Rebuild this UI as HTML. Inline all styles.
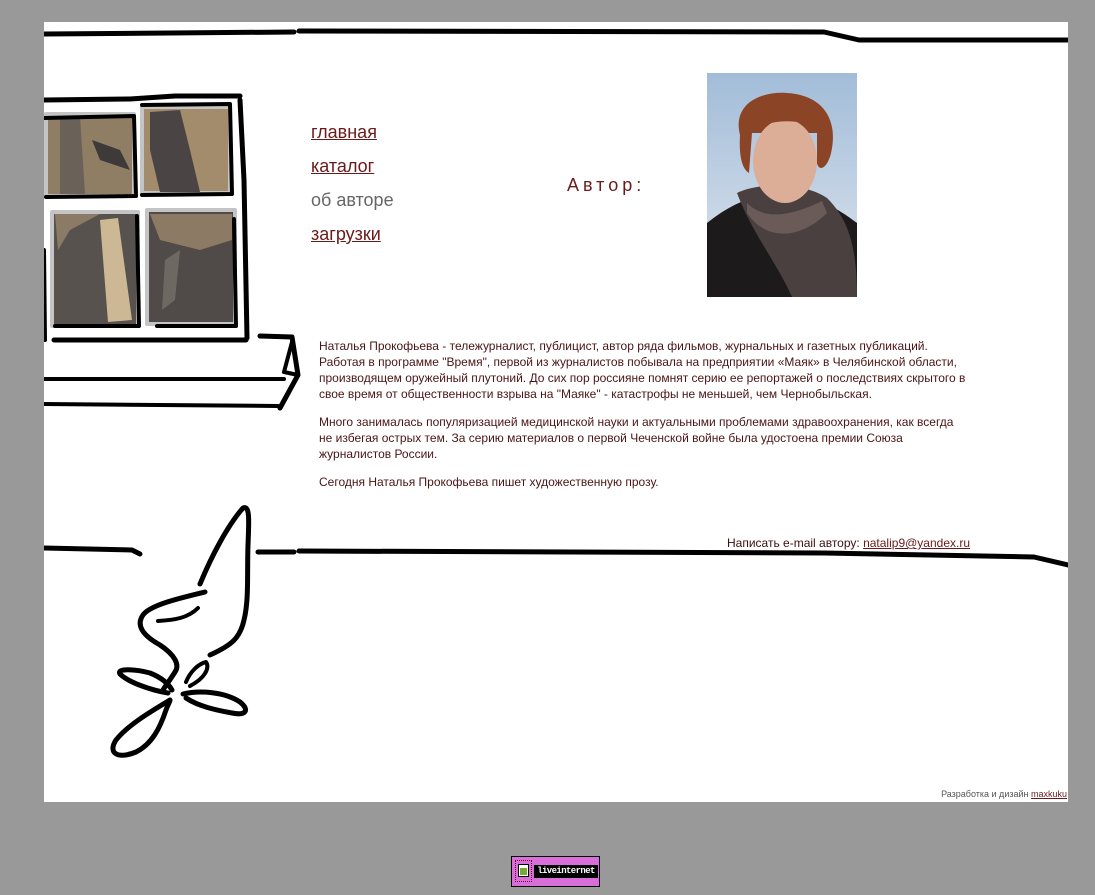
<!DOCTYPE html>
<html><head><meta charset="utf-8"><style>
body{margin:0;background:#999;width:1095px;height:895px;position:relative;overflow:hidden;font-family:"Liberation Sans",Arial,sans-serif}
#w{position:absolute;left:44px;top:22px;width:1024px;height:780px;background:#fff;overflow:hidden}
.nav{position:absolute;left:267px;font-size:18px;color:#6b1a1a;text-decoration:underline}
.txt{position:absolute;left:275px;top:316px;width:700px;font-size:12px;line-height:16px;color:#4a1414;white-space:nowrap}
.txt p{margin:0 0 12px}
a{color:#6b1a1a;text-decoration:underline}
</style></head><body>
<div id="w">
<svg width="1024" height="780" style="position:absolute;left:0;top:0" fill="none" stroke="#000" stroke-linecap="round" stroke-linejoin="round">
<g transform="translate(-44,-22)">
<path d="M44 34 L294 32" stroke-width="5"/>
<path d="M299 31 L824 32 L859 40 L1068 40" stroke-width="5"/>
<rect x="46" y="114" width="88" height="82" fill="#8f7d64" stroke="#c4c4c4" stroke-width="4"/>
<path d="M60 116 L80 116 L85 194 L60 194Z" fill="#6a6258" stroke="none"/>
<path d="M92 140 L120 150 L130 170 L100 160Z" fill="#3e3a3a" stroke="none"/>
<rect x="142" y="107" width="88" height="86" fill="#a38c6c" stroke="#c4c4c4" stroke-width="4"/>
<path d="M150 112 L180 110 L190 150 L200 192 L160 192 L150 150Z" fill="#4a4444" stroke="none"/>
<rect x="52" y="212" width="86" height="114" fill="#58524e" stroke="#c4c4c4" stroke-width="4"/>
<path d="M55 214 L100 214 L70 230 L58 250Z" fill="#8a7a66" stroke="none"/>
<path d="M100 220 L118 218 L132 320 L108 322Z" fill="#cdb896" stroke="none"/>
<rect x="147" y="210" width="88" height="114" fill="#504a48" stroke="#c4c4c4" stroke-width="4"/>
<path d="M150 214 L232 214 L232 240 L200 250 L160 240Z" fill="#8c7a64" stroke="none"/>
<path d="M165 260 L180 250 L175 300 L162 310Z" fill="#6e6862" stroke="none"/>
<path d="M44 118 L134 116 L136 196 L46 197" stroke-width="4"/>
<path d="M142 105 L230 104 L232 194 L142 195" stroke-width="4"/>
<path d="M137 216 L139 326 L55 326" stroke-width="4"/>
<path d="M234 219 L236 326 L157 326" stroke-width="4"/>
<path d="M44 100 L130 99 L175 96 L240 96" stroke-width="5"/>
<path d="M240 100 L244 180 L247 338" stroke-width="5"/>
<path d="M44 250 L45 340" stroke-width="4"/>
<path d="M54 340 L246 340" stroke-width="5"/>
<path d="M260 336 L292 337 L298 375 L280 408" stroke-width="5"/>
<path d="M292 342 L284 372 L298 375" stroke-width="4"/>
<path d="M44 379 L284 379" stroke-width="4"/>
<path d="M44 404 L278 406" stroke-width="4"/>
<path d="M44 548 L132 550 L140 554" stroke-width="5"/>
<path d="M258 552 L294 552" stroke-width="5"/>
<path d="M299 551 L824 553 L1034 557 L1068 565" stroke-width="5"/>
<path d="M200 584 C212 555 228 525 243 508 C250 505 249 520 248 545 C247 575 249 600 244 620 C240 638 232 645 210 655" stroke-width="5"/>
<path d="M205 592 C180 598 150 605 143 615 C136 625 142 635 160 645 C175 655 180 665 175 672 C170 680 166 685 163 690" stroke-width="5"/>
<path d="M158 621 C175 620 188 618 198 608" stroke-width="4"/>
<path d="M168 693 C150 690 128 682 120 674 C116 668 135 669 150 673 C160 677 168 683 172 690" stroke-width="5"/>
<path d="M170 700 C150 712 128 725 116 740 C108 752 116 760 136 752 C152 744 160 728 166 710 C168 704 170 702 170 700" stroke-width="5"/>
<path d="M183 694 C200 690 225 692 240 702 C250 710 246 716 232 713 C215 710 198 706 186 698" stroke-width="5"/>
<path d="M186 682 C190 672 198 664 206 662 C210 668 205 678 190 686" stroke-width="4"/>
</g>
</svg>
<a class="nav" style="top:100px">главная</a>
<a class="nav" style="top:134px">каталог</a>
<div class="nav" style="top:168px;color:#666;text-decoration:none">об авторе</div>
<a class="nav" style="top:202px">загрузки</a>
<div style="position:absolute;left:523px;top:153px;font-size:18px;letter-spacing:4px;color:#6b1a1a">Автор:</div>
<svg style="position:absolute;left:663px;top:51px" width="150" height="224">
<defs><linearGradient id="bg" x1="0" y1="0" x2="0" y2="1"><stop offset="0" stop-color="#a2bcd8"/><stop offset="1" stop-color="#dfe6ee"/></linearGradient></defs>
<rect width="150" height="224" fill="url(#bg)"/>
<path d="M0 224 L0 150 C25 130 50 120 75 120 C105 120 130 135 150 150 L150 224Z" fill="#1c1a1a"/>
<path d="M30 120 C50 110 95 108 120 125 C140 145 150 170 150 224 L85 224 C70 190 45 160 30 120Z" fill="#4a4040"/>
<path d="M40 130 C60 150 90 140 115 128 L120 140 C95 165 60 170 40 140Z" fill="#6a5a58"/>
<path d="M33 62 C25 30 55 18 80 20 C115 22 130 45 125 75 C122 95 112 100 110 90 L110 60 L45 60 L42 100 C34 95 32 80 33 62Z" fill="#8c4426"/>
<ellipse cx="78" cy="88" rx="32" ry="42" fill="#dcae98"/>
<path d="M38 62 C42 30 110 25 120 62 C100 45 70 45 50 55 C45 60 40 64 38 62Z" fill="#8c4426"/>
</svg>
<div class="txt">
<p>Наталья Прокофьева - тележурналист, публицист, автор ряда фильмов, журнальных и газетных публикаций.<br>Работая в программе "Время", первой из журналистов побывала на предприятии «Маяк» в Челябинской области,<br>производящем оружейный плутоний. До сих пор россияне помнят серию ее репортажей о последствиях скрытого в<br>свое время от общественности взрыва на "Маяке" - катастрофы не меньшей, чем Чернобыльская.</p>
<p>Много занималась популяризацией медицинской науки и актуальными проблемами здравоохранения, как всегда<br>не избегая острых тем. За серию материалов о первой Чеченской войне была удостоена премии Союза<br>журналистов России.</p>
<p>Сегодня Наталья Прокофьева пишет художественную прозу.</p>
</div>
<div style="position:absolute;right:98px;top:514px;font-size:12px;color:#3a1010">Написать e-mail автору: <a>natalip9@yandex.ru</a></div>
<div style="position:absolute;right:1px;top:767px;font-size:9px;color:#555">Разработка и дизайн <a>maxkuku</a></div>
</div>
<div style="position:absolute;left:511px;top:856px;width:89px;height:31px;background:#d86fd8;border:1px solid #000;box-sizing:border-box">
<div style="position:absolute;left:3px;top:3px;width:17px;height:22px;border:1px dotted #603;box-sizing:border-box"></div>
<div style="position:absolute;left:6px;top:7px;width:11px;height:13px;background:#fff;border:1px solid #000;box-sizing:border-box"></div>
<div style="position:absolute;left:8px;top:11px;width:7px;height:7px;background:#7a3"></div>
<div style="position:absolute;left:22px;top:8px;width:64px;height:13px;background:#000;color:#fff;font:bold 9px 'Liberation Mono',monospace;line-height:13px;text-align:center;letter-spacing:-0.6px">liveinternet</div>
</div>
</body></html>
